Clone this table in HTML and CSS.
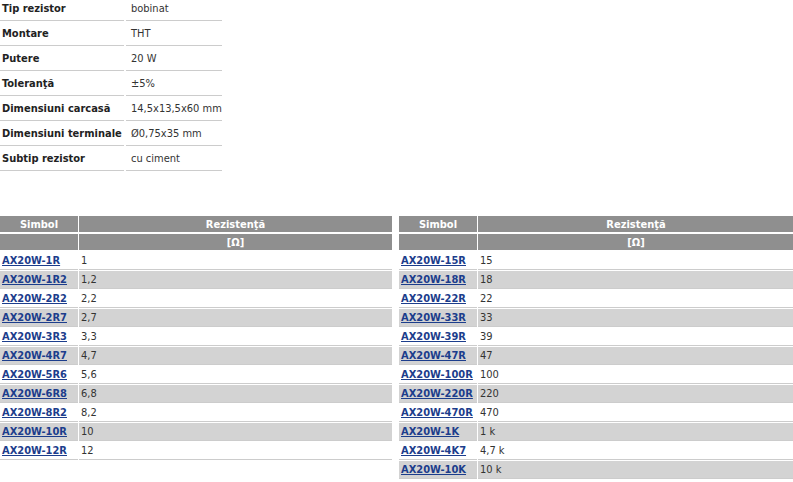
FILE: index.html
```html
<!DOCTYPE html>
<html lang="ro">
<head>
<meta charset="utf-8">
<title>AX20W</title>
<link rel="stylesheet" href="styles.css">
</head>
<body>
<table class="spec">
  <tr><th>Tip rezistor</th><td>bobinat</td></tr>
  <tr><th>Montare</th><td>THT</td></tr>
  <tr><th>Putere</th><td>20 W</td></tr>
  <tr><th>Toleranţă</th><td>±5%</td></tr>
  <tr><th>Dimensiuni carcasă</th><td>14,5x13,5x60 mm</td></tr>
  <tr><th>Dimensiuni terminale</th><td>Ø0,75x35 mm</td></tr>
  <tr><th>Subtip rezistor</th><td>cu ciment</td></tr>
</table>

<div class="lists">
  <table class="parts parts-left">
    <thead>
      <tr><th class="c1">Simbol</th><th>Rezistenţă</th></tr>
      <tr><th class="c1"></th><th>[Ω]</th></tr>
    </thead>
    <tbody>
      <tr><td><a href="#">AX20W-1R</a></td><td>1</td></tr>
      <tr><td><a href="#">AX20W-1R2</a></td><td>1,2</td></tr>
      <tr><td><a href="#">AX20W-2R2</a></td><td>2,2</td></tr>
      <tr><td><a href="#">AX20W-2R7</a></td><td>2,7</td></tr>
      <tr><td><a href="#">AX20W-3R3</a></td><td>3,3</td></tr>
      <tr><td><a href="#">AX20W-4R7</a></td><td>4,7</td></tr>
      <tr><td><a href="#">AX20W-5R6</a></td><td>5,6</td></tr>
      <tr><td><a href="#">AX20W-6R8</a></td><td>6,8</td></tr>
      <tr><td><a href="#">AX20W-8R2</a></td><td>8,2</td></tr>
      <tr><td><a href="#">AX20W-10R</a></td><td>10</td></tr>
      <tr><td><a href="#">AX20W-12R</a></td><td>12</td></tr>
    </tbody>
  </table>
  <table class="parts parts-right">
    <thead>
      <tr><th class="c1">Simbol</th><th>Rezistenţă</th></tr>
      <tr><th class="c1"></th><th>[Ω]</th></tr>
    </thead>
    <tbody>
      <tr><td><a href="#">AX20W-15R</a></td><td>15</td></tr>
      <tr><td><a href="#">AX20W-18R</a></td><td>18</td></tr>
      <tr><td><a href="#">AX20W-22R</a></td><td>22</td></tr>
      <tr><td><a href="#">AX20W-33R</a></td><td>33</td></tr>
      <tr><td><a href="#">AX20W-39R</a></td><td>39</td></tr>
      <tr><td><a href="#">AX20W-47R</a></td><td>47</td></tr>
      <tr><td><a href="#">AX20W-100R</a></td><td>100</td></tr>
      <tr><td><a href="#">AX20W-220R</a></td><td>220</td></tr>
      <tr><td><a href="#">AX20W-470R</a></td><td>470</td></tr>
      <tr><td><a href="#">AX20W-1K</a></td><td>1 k</td></tr>
      <tr><td><a href="#">AX20W-4K7</a></td><td>4,7 k</td></tr>
      <tr><td><a href="#">AX20W-10K</a></td><td>10 k</td></tr>
    </tbody>
  </table>
</div>
</body>
</html>
```

FILE: styles.css
```css
html, body {
  margin: 0;
  padding: 0;
  background: #ffffff;
}

body {
  font-family: "DejaVu Sans Condensed", "DejaVu Sans", sans-serif;
  font-size: 11px;
  color: #333333;
  overflow: hidden;
}

/* ---------- specification table ---------- */
.spec {
  border-collapse: separate;
  border-spacing: 2px 0;
  margin: -4px 0 0 -2px;
}

.spec th,
.spec td {
  height: 24px;
  padding: 0;
  border-bottom: 1px solid #cccccc;
  text-align: left;
  vertical-align: middle;
  white-space: nowrap;
}

.spec th {
  width: 122px;
  padding-left: 2px;
  font-weight: bold;
  color: #222222;
}

.spec td {
  width: 91px;
  padding-left: 5px;
  color: #333333;
}

/* ---------- part lists ---------- */
.lists {
  display: flex;
  align-items: flex-start;
  gap: 5px;
  margin-top: 44px;
  margin-left: -1px;
}

.parts {
  border-collapse: separate;
  border-spacing: 1px;
  flex: none;
}

.parts-left { width: 394px; }
.parts-right { width: 397px; }

.parts th {
  height: 16px;
  padding: 0;
  background: #8f8f8f;
  color: #ffffff;
  font-weight: bold;
  text-align: center;
  vertical-align: middle;
  border-bottom: 1px solid #ffffff;
}

.parts th.c1 { width: 78px; }

.parts td {
  height: 17px;
  padding: 0 0 0 2px;
  border-bottom: 1px solid #cccccc;
  vertical-align: middle;
  white-space: nowrap;
  color: #333333;
}

.parts tbody tr:nth-child(even) td {
  background: #d3d3d3;
}

.parts a {
  color: #1c3d8c;
  font-weight: bold;
  text-decoration: underline;
}
```
